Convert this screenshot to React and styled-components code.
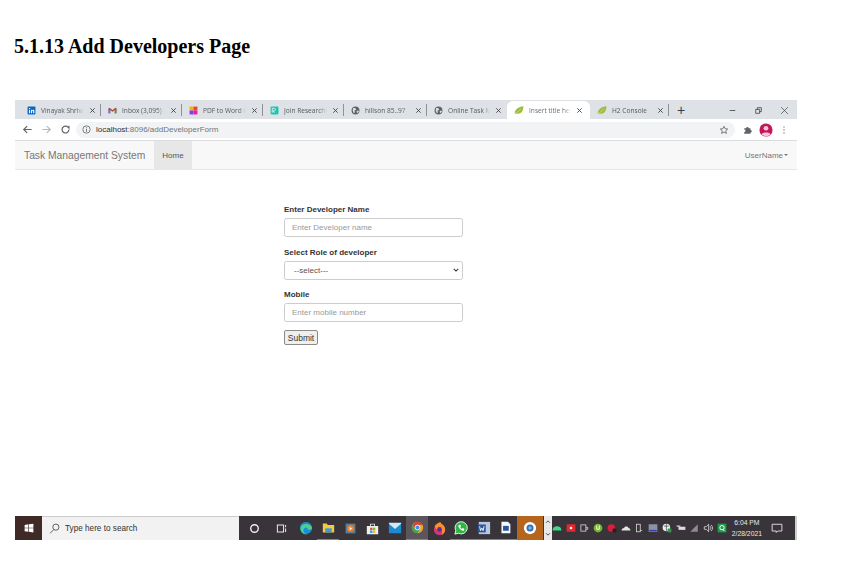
import styled, { createGlobalStyle } from "styled-components";

const GlobalStyle = createGlobalStyle`
  html, body {
    margin: 0;
    padding: 0;
    background: #fff;
  }
  body {
    font-family: "Liberation Sans", Arial, sans-serif;
  }
`;

const Page = styled.div`
  width: 850px;
  height: 571px;
  overflow: hidden;
  padding-top: 36px;
  box-sizing: border-box;
`;

const Title = styled.h1`
  margin: 0 0 0 14px;
  height: 64px;
  font: bold 20px/21px "Liberation Serif", "Times New Roman", serif;
  color: #000;
`;

const Frame = styled.div`
  margin-left: 15px;
  width: 782px;
  height: 440px;
  display: flex;
  flex-direction: column;
  background: #fff;
`;

const TabStrip = styled.div`
  height: 19px;
  background: #dee1e6;
  display: flex;
  align-items: flex-end;
  padding-left: 5px;
`;

const Tab = styled.div`
  width: ${(p) => p.$width || 81}px;
  height: 18px;
  flex: none;
  display: flex;
  align-items: center;
  gap: 5px;
  padding: 0 ${(p) => (p.$active ? 7 : 5)}px 0 7px;
  box-sizing: border-box;
  border-radius: 6px 6px 0 0;
  background: ${(p) => (p.$active ? "#fff" : "transparent")};
  font-size: 6.6px;
  font-family: "Open Sans", "Liberation Sans", sans-serif;
  color: ${(p) => (p.$active ? "#6a6e72" : "#55585c")};
  position: relative;

  &::after {
    content: "";
    display: ${(p) => (p.$sep ? "block" : "none")};
    position: absolute;
    right: 0;
    top: 3px;
    height: 12px;
    width: 1px;
    background: #8e9196;
  }
`;

const TabLabel = styled.span`
  flex: 1;
  min-width: 0;
  white-space: nowrap;
  -webkit-mask-image: linear-gradient(90deg, #000 82%, transparent);
  mask-image: linear-gradient(90deg, #000 82%, transparent);
`;

const NewTab = styled.span`
  margin-left: 8px;
  width: 14px;
  height: 18px;
  display: flex;
  align-items: center;
  font-size: 14px;
  color: #3c4043;
`;

const WindowButtons = styled.div`
  margin-left: auto;
  display: flex;
  align-items: center;
  height: 18px;
  gap: 17px;
  padding-right: 8px;
`;

const Toolbar = styled.div`
  height: 21px;
  background: #fff;
  border-bottom: 1px solid #dadce0;
  display: flex;
  align-items: center;
  padding-left: 7px;
`;

const NavIcons = styled.div`
  display: flex;
  align-items: center;
  gap: 8px;
  width: 54px;
  flex: none;
`;

const Omnibox = styled.div`
  width: 659px;
  height: 16px;
  border-radius: 8px;
  background: #f1f3f4;
  display: flex;
  align-items: center;
  padding: 0 6px;
  box-sizing: border-box;
  gap: 5px;
  font-size: 8px;
  color: #70757a;
  flex: none;
`;

const Host = styled.span`
  color: #303134;
`;

const Url = styled.span`
  flex: 1;
`;

const ToolIcons = styled.div`
  display: flex;
  align-items: center;
  gap: 6px;
  margin-left: 8px;
`;

const Navbar = styled.nav`
  height: 28px;
  background: #f8f8f8;
  border-bottom: 1px solid #e7e7e7;
  display: flex;
  align-items: stretch;
  padding-left: 9px;
`;

const Brand = styled.span`
  display: flex;
  align-items: center;
  width: 130px;
  font-size: 10.3px;
  color: #777;
`;

const NavLink = styled.span`
  width: 38px;
  background: #e7e7e7;
  display: flex;
  align-items: center;
  justify-content: center;
  font-size: 8px;
  color: #555;
`;

const UserMenu = styled.span`
  margin-left: auto;
  padding-right: 9px;
  display: flex;
  align-items: center;
  gap: 1px;
  font-size: 8px;
  color: #777;
`;

const Caret = styled.i`
  width: 0;
  height: 0;
  border-left: 2px solid transparent;
  border-right: 2px solid transparent;
  border-top: 2px solid #777;
`;

const Content = styled.main`
  flex: 1;
  padding: 32.5px 0 0 269px;
`;

const Form = styled.form`
  width: 179px;
  display: flex;
  flex-direction: column;
`;

const Label = styled.label`
  font-size: 8px;
  line-height: 10px;
  font-weight: bold;
  color: #333;
  margin: 2.5px 0 3px;
`;

const Field = styled.div`
  height: 19px;
  box-sizing: border-box;
  border: 1px solid #ccc;
  border-radius: 2.5px;
  background: #fff;
  margin-bottom: 8px;
  padding: ${(p) => (p.$select ? "0 3px 0 9px" : "0 7px")};
  display: flex;
  align-items: center;
  justify-content: space-between;
  font-size: 8px;
  color: ${(p) => (p.$select ? "#555" : "#999")};
`;

const SubmitButton = styled.button`
  width: 34px;
  height: 15px;
  padding: 0;
  border: 1px solid #8a8a8a;
  border-radius: 2px;
  background: #efefef;
  font: 8.5px "Liberation Sans", Arial, sans-serif;
  color: #333;
`;

const Taskbar = styled.footer`
  height: 24px;
  background: #39333a;
  display: flex;
  align-items: center;
  border-right: 2px solid #cfcfcf;
  box-sizing: border-box;
`;

const StartButton = styled.div`
  width: 27px;
  height: 100%;
  background: #3f2a28;
  display: flex;
  align-items: center;
  justify-content: center;
  flex: none;
`;

const SearchBox = styled.div`
  width: 197px;
  height: 100%;
  background: #f2f2f2;
  border-top: 1px solid #ccc;
  box-sizing: border-box;
  display: flex;
  align-items: center;
  gap: 5px;
  padding-left: 7px;
  font-size: 8.2px;
  color: #333;
  flex: none;
`;

const AppArea = styled.div`
  display: flex;
  align-items: center;
  height: 100%;
  padding-left: 2px;
  flex: none;
`;

const AppSlot = styled.div`
  width: ${(p) => p.$width || 22.2}px;
  height: 100%;
  display: flex;
  align-items: center;
  justify-content: center;
  flex: none;
  box-sizing: border-box;
  background: ${(p) => p.$bg || "transparent"};
  border-bottom: ${(p) => (p.$running ? "1px solid #5f8fb5" : "0")};
`;

const Scroller = styled.div`
  width: 8px;
  height: 100%;
  background: #e9e9e9;
  display: flex;
  flex-direction: column;
  align-items: center;
  justify-content: space-around;
  flex: none;
  margin-left: 1px;
`;

const Tray = styled.div`
  display: flex;
  align-items: center;
  gap: 3.75px;
  flex: none;
`;

const Clock = styled.div`
  width: 40px;
  text-align: center;
  font-size: 6.8px;
  line-height: 11px;
  color: #e8e8e8;
  flex: none;
`;

const Glyph = ({ size = 9, children, style }) => (
  <svg width={size} height={size} viewBox="0 0 16 16" style={{ flex: "none", ...style }}>
    {children}
  </svg>
);

const Linkedin = () => (
  <Glyph>
    <rect x="1" y="1" width="14" height="14" rx="1.5" fill="#0a66c2" />
    <path d="M3.5 6.5h2V13h-2zM3.5 3.5h2v2h-2zM7 6.500h2v1c1-1.600 4-1.500 4 1.500V13h-2V9.500c0-1.500-2-1.500-2 0V13H7z" fill="#fff" />
  </Glyph>
);
const Gmail = () => (
  <Glyph>
    <path d="M1 4v9h3V7l4 3 4-3v6h3V4l-1.500-1L8 7 2.500 3z" fill="#c5392f" />
    <path d="M12 7v6h3V4z" fill="#34a853" />
    <path d="M1 4v9h3V7z" fill="#4285f4" />
  </Glyph>
);
const Pdf = () => (
  <Glyph>
    <rect x="1" y="1" width="7" height="7" fill="#f4b400" />
    <rect x="8" y="1" width="7" height="7" fill="#e8453c" />
    <rect x="1" y="8" width="7" height="7" fill="#7e3ff2" />
    <rect x="8" y="8" width="7" height="7" fill="#e91e9c" />
  </Glyph>
);
const Research = () => (
  <Glyph>
    <rect x="1" y="1" width="14" height="14" rx="2" fill="#16c5b3" />
    <path d="M4 12V4h3.500a2 2 0 0 1 0 4.500H5.500L8 12" stroke="#fff" strokeWidth="1.300" fill="none" />
  </Glyph>
);
const Globe = () => (
  <Glyph>
    <circle cx="8" cy="8" r="7" fill="#5f6368" />
    <path d="M4 3l4 1 1 3-3 1 1 3-2 2-2-5zM10 9l3-1 1 2-3 3z" fill="#dee1e6" />
  </Glyph>
);
const Leaf = () => (
  <Glyph size={10}>
    <path d="M1 13C2 6 8 3 15 2c0 7-3 12-9 12-2 0-4 0-5-1z" fill="#9bbd3c" />
    <path d="M2 13c3-1 6-3 9-7" stroke="#e8f0c0" strokeWidth="0.800" fill="none" />
  </Glyph>
);
const Close = () => (
  <Glyph size={7}>
    <path d="M3 3l10 10M13 3L3 13" stroke="#3c4043" strokeWidth="2" />
  </Glyph>
);

const WinLogo = () => (
  <Glyph size={10}>
    <path d="M1 3l6-1v5.500H1zM8 2l7-1v6.500H8zM1 8.500h6V14l-6-1zM8 8.500h7V15l-7-1z" fill="#fff" />
  </Glyph>
);

const tabs = [
  { icon: <Linkedin />, label: "Vinayak Shriva", sep: true },
  { icon: <Gmail />, label: "Inbox (3,095) -", sep: true },
  { icon: <Pdf />, label: "PDF to Word C", sep: true },
  { icon: <Research />, label: "Join ResearchG", sep: true },
  { icon: <Globe />, label: "hillson 85..97", sep: true, width: 83 },
  { icon: <Globe />, label: "Online Task M", width: 80 },
  { icon: <Leaf />, label: "Insert title here", active: true, width: 83 },
  { icon: <Leaf />, label: "H2 Console", sep: true, width: 79 },
];

const apps = [
  {
    key: "edge",
    icon: (
      <Glyph size={14}>
        <circle cx="8" cy="8" r="7" fill="#1b8fd6" />
        <path d="M2 7c2-5 11-5 13 1 0 2-3 2-5 2 1-3-5-4-5 1 0 2 2 4 5 4-5 1-9-3-8-8z" fill="#4fd08a" />
      </Glyph>
    ),
  },
  {
    key: "files",
    running: true,
    icon: (
      <Glyph size={13}>
        <path d="M1 3h5l1 2h8v9H1z" fill="#f5c842" />
        <rect x="4" y="9" width="8" height="5" fill="#3b9ad9" />
      </Glyph>
    ),
  },
  {
    key: "media",
    icon: (
      <Glyph size={13}>
        <rect x="2" y="2" width="12" height="12" fill="#5f7f96" />
        <circle cx="8" cy="8" r="4" fill="#f0852b" />
        <path d="M7 6l3 2-3 2z" fill="#fff" />
      </Glyph>
    ),
  },
  {
    key: "store",
    icon: (
      <Glyph size={13}>
        <path d="M1 5h14v10H1zM5 5V2h6v3h-1V3H6v2z" fill="#eee" />
        <rect x="5" y="7" width="3" height="3" fill="#e8532b" />
        <rect x="8.500" y="7" width="3" height="3" fill="#7eb836" />
        <rect x="5" y="10.500" width="3" height="3" fill="#2aa3ea" />
        <rect x="8.500" y="10.500" width="3" height="3" fill="#f7b90f" />
      </Glyph>
    ),
  },
  {
    key: "mail",
    icon: (
      <Glyph size={14}>
        <rect x="1" y="3" width="14" height="11" fill="#1c8ad0" />
        <path d="M1 3l7 6 7-6v-1H1z" fill="#cfe9fa" />
      </Glyph>
    ),
  },
  {
    key: "chrome",
    running: true,
    bg: "#5a565b",
    icon: (
      <Glyph size={13}>
        <circle cx="8" cy="8" r="7" fill="#e5a82e" />
        <path d="M8 1a7 7 0 0 0-6 3.500L5 10l3-5h6.500A7 7 0 0 0 8 1z" fill="#d2453b" />
        <path d="M2 4.500A7 7 0 0 0 8 15l3-5H5z" fill="#3fa35a" />
        <circle cx="8" cy="8" r="3" fill="#4a8de0" stroke="#fff" />
      </Glyph>
    ),
  },
  {
    key: "firefox",
    icon: (
      <Glyph size={15}>
        <circle cx="8" cy="9" r="6" fill="#d9386f" />
        <path d="M3 5c2-2 3-3 6-4 0 2 5 3 5 8 0 3-2 5-4 6 2-3 0-7-2-6-2 0-4 1-5-4z" fill="#f9902c" />
        <circle cx="8" cy="9" r="2.500" fill="#5b2a9c" />
      </Glyph>
    ),
  },
  {
    key: "whatsapp",
    running: true,
    icon: (
      <Glyph size={14}>
        <path d="M1 15l1-4a7 7 0 1 1 3 3z" fill="#2bb741" stroke="#fff" />
        <path d="M5 5c0 3 3 6 6 6l1-2-2-1-1 1-2-2 1-1-1-2z" fill="#fff" />
      </Glyph>
    ),
  },
  {
    key: "word",
    running: true,
    icon: (
      <Glyph size={14}>
        <rect x="2" y="1" width="13" height="14" fill="#b8c8e0" />
        <rect x="1" y="4" width="9" height="9" fill="#2f5597" />
        <path d="M3 6l1 5 1.500-3L7 11l1-5" stroke="#fff" fill="none" />
      </Glyph>
    ),
  },
  {
    key: "paint",
    running: true,
    icon: (
      <Glyph size={13}>
        <path d="M3 1h8l3 3v11H3z" fill="#f4f7fb" />
        <rect x="5" y="6" width="7" height="6" fill="#24579b" />
      </Glyph>
    ),
  },
  {
    key: "active",
    width: 26,
    bg: "#b5651d",
    icon: (
      <Glyph size={14}>
        <circle cx="8" cy="8" r="7" fill="#fff" />
        <circle cx="8" cy="8" r="4" fill="#2f6fb7" />
        <circle cx="8" cy="8" r="2" fill="#7db4e6" />
      </Glyph>
    ),
  },
];

const stroke = { stroke: "#d8d8d8", fill: "none", strokeWidth: 1.3 };

const tray = [
  <path key="a" d="M1 12c0-5 3-7 7-7s7 2 7 7z" fill="#3ddc84" />,
  <g key="b"><rect x="1" y="2" width="14" height="12" fill="#e0282e" /><circle cx="8" cy="8" r="2" fill="#fff" /></g>,
  <g key="c"><rect x="3" y="3" width="8" height="10" {...stroke} /><path d="M11 7h3v3h-3" {...stroke} /></g>,
  <g key="d"><circle cx="8" cy="8" r="7" fill="#74b72e" /><path d="M6 4v6h4V4" stroke="#fff" strokeWidth="1.500" fill="none" /></g>,
  <g key="e"><circle cx="7" cy="8" r="6" fill="#d8203a" /><rect x="9" y="9" width="6" height="6" fill="#222" /></g>,
  <path key="f" d="M1 12c0-3 2-4 4-4 1-3 6-3 7 0 2 0 3 2 3 4z" fill="#e4e4e4" />,
  <g key="g"><rect x="4" y="2" width="6" height="12" {...stroke} /><path d="M10 12h3" {...stroke} /></g>,
  <g key="h"><rect x="1" y="2" width="14" height="12" fill="#8893a8" /><rect x="2" y="11" width="12" height="2" fill="#3b3ea8" /></g>,
  <g key="i"><circle cx="7" cy="7" r="6" fill="#eee" /><path d="M3 5h8M7 1v12" stroke="#333" /><rect x="9" y="9" width="6" height="6" fill="#2a9d4a" /></g>,
  <g key="j"><rect x="4" y="6" width="11" height="5" fill="#ddd" /><path d="M1 4h6v2H1z" fill="#ddd" /></g>,
  <path key="k" d="M2 14L14 2v12z" fill="#8d8d8d" />,
  <g key="l"><path d="M2 6h3l4-4v12l-4-4H2z" {...stroke} /><path d="M11 5c2 2 2 4 0 6M13 3c3 3 3 7 0 10" {...stroke} /></g>,
  <g key="m"><rect x="1" y="1" width="14" height="14" fill="#1e9e4a" /><circle cx="8" cy="7.500" r="3.500" stroke="#fff" strokeWidth="1.600" fill="none" /><path d="M9 10l3 3" stroke="#fff" strokeWidth="1.600" /></g>,
];

export default function App() {
  return (
    <Page>
      <GlobalStyle />
      <Title>5.1.13 Add Developers Page</Title>
      <Frame>
        <TabStrip>
          {tabs.map((tab) => (
            <Tab key={tab.label} $active={tab.active} $sep={tab.sep} $width={tab.width}>
              {tab.icon}
              <TabLabel>{tab.label}</TabLabel>
              <Close />
            </Tab>
          ))}
          <NewTab>+</NewTab>
          <WindowButtons>
            <Glyph><path d="M3 8h10" stroke="#3c4043" strokeWidth="1.400" /></Glyph>
            <Glyph><path d="M3 6h7v7H3zM6 6V3h7v7h-3" stroke="#3c4043" strokeWidth="1.400" fill="none" /></Glyph>
            <Glyph><path d="M2 2l12 12M14 2L2 14" stroke="#3c4043" strokeWidth="1.200" /></Glyph>
          </WindowButtons>
        </TabStrip>
        <Toolbar>
          <NavIcons>
            <Glyph size={11}><path d="M14 8H3M7.500 3L2.500 8l5 5" stroke="#5f6368" strokeWidth="1.700" fill="none" /></Glyph>
            <Glyph size={11}><path d="M2 8h11M8.500 3l5 5-5 5" stroke="#b6b8bb" strokeWidth="1.700" fill="none" /></Glyph>
            <Glyph size={11}><path d="M13 8a5 5 0 1 1-1.500-3.500L13 6V2.500" stroke="#5f6368" strokeWidth="1.700" fill="none" /></Glyph>
          </NavIcons>
          <Omnibox>
            <Glyph size={9}>
              <circle cx="8" cy="8" r="6.500" stroke="#5f6368" strokeWidth="1.400" fill="none" />
              <path d="M8 7v5M8 4v1.800" stroke="#5f6368" strokeWidth="1.500" />
            </Glyph>
            <Url><Host>localhost</Host>:8096/addDeveloperForm</Url>
            <Glyph size={10}>
              <path d="M8 2l1.800 4 4.200.4-3.200 2.800 1 4.300L8 11.200 4.200 13.500l1-4.300L2 6.400 6.200 6z" stroke="#5f6368" strokeWidth="1.300" fill="none" />
            </Glyph>
          </Omnibox>
          <ToolIcons>
            <Glyph size={10}>
              <path d="M2 5h3a2 2 0 1 1 4 0h3v3a2 2 0 1 1 0 4v2H2v-3a2 2 0 1 0 0-4z" fill="#5f6368" />
            </Glyph>
            <Glyph size={14}>
              <circle cx="8" cy="8" r="7.500" fill="#c2185b" />
              <circle cx="8" cy="6" r="2.700" fill="#f8c6d8" />
              <path d="M2.800 13c1-3 9.400-3 10.400 0a7.500 7.500 0 0 1-10.400 0z" fill="#f8c6d8" />
            </Glyph>
            <Glyph size={10}>
              <path d="M8 2.500v1.600M8 7.200v1.600M8 11.900v1.600" stroke="#5f6368" strokeWidth="2" />
            </Glyph>
          </ToolIcons>
        </Toolbar>
        <Navbar>
          <Brand>Task Management System</Brand>
          <NavLink>Home</NavLink>
          <UserMenu>UserName<Caret /></UserMenu>
        </Navbar>
        <Content>
          <Form>
            <Label>Enter Developer Name</Label>
            <Field>Enter Developer name</Field>
            <Label>Select Role of developer</Label>
            <Field $select>
              --select---
              <Glyph size={6}><path d="M2 5l6 6 6-6" stroke="#333" strokeWidth="2.800" fill="none" /></Glyph>
            </Field>
            <Label>Mobile</Label>
            <Field>Enter mobile number</Field>
            <SubmitButton type="button">Submit</SubmitButton>
          </Form>
        </Content>
        <Taskbar>
          <StartButton><WinLogo /></StartButton>
          <SearchBox>
            <Glyph size={11}>
              <circle cx="10" cy="6" r="4.500" stroke="#444" strokeWidth="1.200" fill="none" />
              <path d="M7 9.500L1.500 15" stroke="#444" strokeWidth="1.200" />
            </Glyph>
            Type here to search
          </SearchBox>
          <AppArea>
            <AppSlot $width={26}>
              <Glyph size={11}><circle cx="8" cy="8" r="5.500" stroke="#f0f0f0" strokeWidth="2" fill="none" /></Glyph>
            </AppSlot>
            <AppSlot $width={28}>
              <Glyph size={11}>
                <path d="M2 3h9v10H2zM14 3v3M14 8v5" stroke="#e8e8e8" strokeWidth="1.500" fill="none" />
              </Glyph>
            </AppSlot>
            {apps.map((app) => (
              <AppSlot key={app.key} $width={app.width} $bg={app.bg} $running={app.running}>
                {app.icon}
              </AppSlot>
            ))}
          </AppArea>
          <Scroller>
            <Glyph size={6}><path d="M3 10l5-5 5 5" stroke="#444" strokeWidth="2.500" fill="none" /></Glyph>
            <Glyph size={6}><path d="M3 6l5 5 5-5" stroke="#444" strokeWidth="2.500" fill="none" /></Glyph>
          </Scroller>
          <Tray>
            {tray.map((shape) => (
              <Glyph key={shape.key} size={10}>{shape}</Glyph>
            ))}
          </Tray>
          <Clock>6:04 PM<br />2/28/2021</Clock>
          <AppSlot $width={20}>
            <Glyph size={12}><path d="M1.500 3h13v9H9l-2 2v-2H1.500z" stroke="#e8e8e8" strokeWidth="1.200" fill="none" /></Glyph>
          </AppSlot>
        </Taskbar>
      </Frame>
    </Page>
  );
}
